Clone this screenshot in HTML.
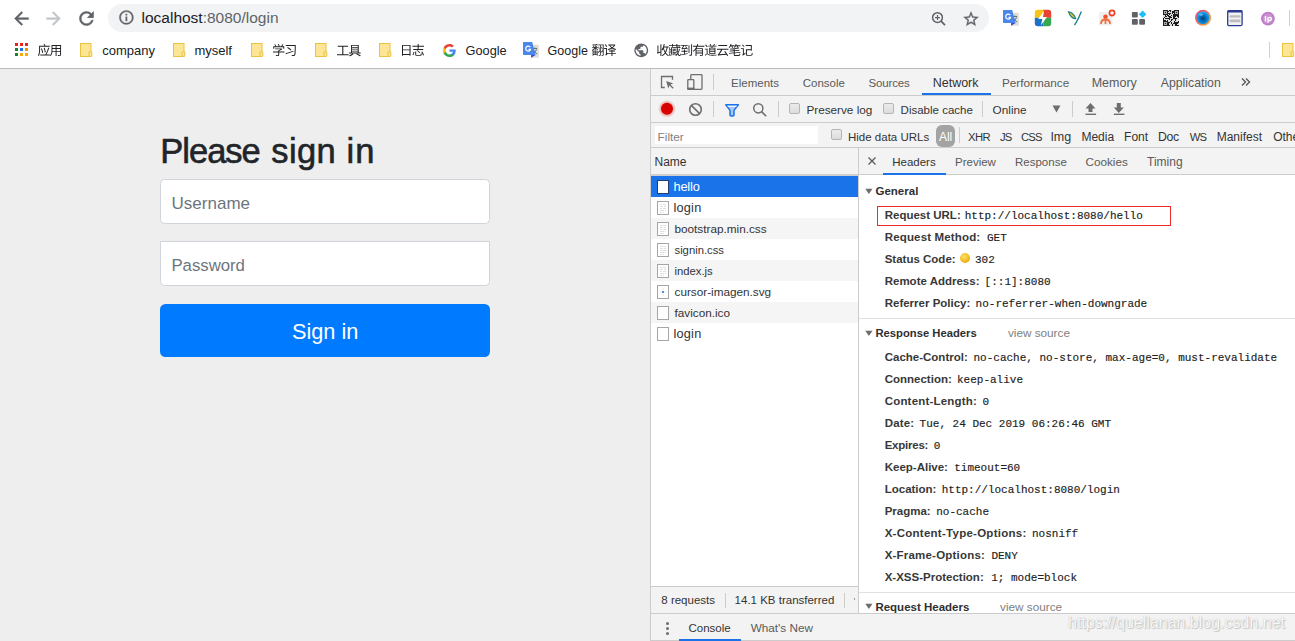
<!DOCTYPE html>
<html><head><meta charset="utf-8"><style>
html,body{margin:0;padding:0}
body{width:1295px;height:641px;overflow:hidden;position:relative;background:#fff;font-family:"Liberation Sans",sans-serif}
.a{position:absolute;white-space:pre;margin:0;padding:0}
</style></head><body>
<div class=a style='left:0px;top:0px;width:1295px;height:68px;background:#ffffff;'></div>
<div class=a style='left:0px;top:68px;width:1295px;height:1px;background:#bcbcbc;'></div>
<svg class=a style='left:11.2px;top:7.6px;' width='21' height='21' viewBox='0 0 21 21'><g transform='scale(0.875)'><path fill='#5f6368' stroke='#5f6368' stroke-width='0.5' d='M20 11H7.83l5.59-5.59L12 4l-8 8 8 8 1.41-1.41L7.83 13H20v-2z'/></g></svg>
<svg class=a style='left:43.2px;top:7.6px;' width='21' height='21' viewBox='0 0 21 21'><g transform='scale(0.875)'><path fill='#c2c5c9' stroke='#c2c5c9' stroke-width='0.5' d='M4 11h12.17l-5.59-5.59L12 4l8 8-8 8-1.41-1.41L16.17 13H4v-2z'/></g></svg>
<svg class=a style='left:75.8px;top:7.8px;' width='21' height='21' viewBox='0 0 21 21'><g transform='scale(0.875)'><path fill='#5f6368' stroke='#5f6368' stroke-width='0.6' d='M17.65 6.35A7.958 7.958 0 0012 4c-4.42 0-7.99 3.58-7.99 8s3.57 8 7.99 8c3.73 0 6.84-2.55 7.73-6h-2.08A5.99 5.99 0 0112 18c-3.31 0-6-2.69-6-6s2.69-6 6-6c1.66 0 3.14.69 4.22 1.78L13 11h7V4l-2.35 2.35z'/></g></svg>
<div class=a style='left:108px;top:4px;width:881px;height:28px;background:#f1f3f4;border-radius:14px'></div>
<svg class=a style='left:117.6px;top:9.1px;' width='17' height='17' viewBox='0 0 17 17'><g transform='scale(0.7)'><path fill='#5f6368' stroke='#5f6368' stroke-width='0.5' d='M11 7h2v2h-2zm0 4h2v6h-2zm1-9C6.48 2 2 6.48 2 12s4.48 10 10 10 10-4.48 10-10S17.52 2 12 2zm0 18c-4.41 0-8-3.59-8-8s3.59-8 8-8 8 3.59 8 8-3.59 8-8 8z'/></g></svg>
<div class=a style='left:141.5px;top:9px;font-family:"Liberation Sans";font-size:15.5px;font-weight:400;line-height:17px;color:#5f6368;'><span style='color:#202124'>localhost</span>:8080/login</div>
<svg class=a style='left:928px;top:9px;' width='20' height='20' viewBox='0 0 20 20'><circle cx='9.5' cy='8.6' r='4.9' fill='none' stroke='#5f6368' stroke-width='1.5'/><path d='M13 12.1l4 4' stroke='#5f6368' stroke-width='1.7'/><path d='M7 8.6h5M9.5 6.1v5' stroke='#5f6368' stroke-width='1.2'/></svg>
<svg class=a style='left:962.2px;top:9.7px;' width='18' height='18' viewBox='0 0 18 18'><g transform='scale(0.75)'><path fill='#5f6368' stroke='#5f6368' stroke-width='0.4' d='M22 9.24l-7.19-.62L12 2 9.19 8.63 2 9.24l5.46 4.73L5.82 21 12 17.27 18.18 21l-1.63-7.03L22 9.24zM12 15.4l-3.76 2.27 1-4.28-3.32-2.88 4.38-.38L12 6.1l1.71 4.04 4.38.38-3.32 2.88 1 4.28L12 15.4z'/></g></svg>
<div class=a style='left:1289px;top:10px;width:1px;height:16px;background:#d0d0d0;'></div>
<div class=a style='left:15px;top:43px;width:3px;height:3px;background:#e8231f;'></div>
<div class=a style='left:20px;top:43px;width:3px;height:3px;background:#e8231f;'></div>
<div class=a style='left:25px;top:43px;width:3px;height:3px;background:#e8231f;'></div>
<div class=a style='left:15px;top:48px;width:3px;height:3px;background:#188038;'></div>
<div class=a style='left:20px;top:48px;width:3px;height:3px;background:#1a73e8;'></div>
<div class=a style='left:25px;top:48px;width:3px;height:3px;background:#e89400;'></div>
<div class=a style='left:15px;top:53px;width:3px;height:3px;background:#188038;'></div>
<div class=a style='left:20px;top:53px;width:3px;height:3px;background:#f9ab00;'></div>
<div class=a style='left:25px;top:53px;width:3px;height:3px;background:#f9ab00;'></div>
<svg class=a style='left:80px;top:43px;' width='13' height='15' viewBox='0 0 13 15'><rect x='0.5' y='0.5' width='10.5' height='13' fill='#fde596' stroke='#e9c440'/><rect x='9' y='8.5' width='2.8' height='5' rx='1' fill='#fde596' stroke='#e9c440'/></svg>
<svg class=a style='left:173px;top:43px;' width='13' height='15' viewBox='0 0 13 15'><rect x='0.5' y='0.5' width='10.5' height='13' fill='#fde596' stroke='#e9c440'/><rect x='9' y='8.5' width='2.8' height='5' rx='1' fill='#fde596' stroke='#e9c440'/></svg>
<svg class=a style='left:251px;top:43px;' width='13' height='15' viewBox='0 0 13 15'><rect x='0.5' y='0.5' width='10.5' height='13' fill='#fde596' stroke='#e9c440'/><rect x='9' y='8.5' width='2.8' height='5' rx='1' fill='#fde596' stroke='#e9c440'/></svg>
<svg class=a style='left:315px;top:43px;' width='13' height='15' viewBox='0 0 13 15'><rect x='0.5' y='0.5' width='10.5' height='13' fill='#fde596' stroke='#e9c440'/><rect x='9' y='8.5' width='2.8' height='5' rx='1' fill='#fde596' stroke='#e9c440'/></svg>
<svg class=a style='left:379px;top:43px;' width='13' height='15' viewBox='0 0 13 15'><rect x='0.5' y='0.5' width='10.5' height='13' fill='#fde596' stroke='#e9c440'/><rect x='9' y='8.5' width='2.8' height='5' rx='1' fill='#fde596' stroke='#e9c440'/></svg>
<svg class=a style='left:1282px;top:43px;' width='13' height='15' viewBox='0 0 13 15'><rect x='0.5' y='0.5' width='10.5' height='13' fill='#fde596' stroke='#e9c440'/><rect x='9' y='8.5' width='2.8' height='5' rx='1' fill='#fde596' stroke='#e9c440'/></svg>
<svg class=a style='left:36.00px;top:41.84px' width='27' height='16' viewBox='-1.53 -13.02 27 16'><path fill='#202124' d='M3.43 -6.37C3.96 -4.97 4.59 -3.11 4.84 -1.9L5.76 -2.27C5.47 -3.48 4.85 -5.29 4.28 -6.72ZM6.25 -7.1C6.67 -5.68 7.15 -3.83 7.33 -2.63L8.27 -2.91C8.07 -4.12 7.59 -5.93 7.14 -7.34ZM6.08 -10.76C6.33 -10.31 6.59 -9.71 6.77 -9.24H1.57V-5.69C1.57 -3.85 1.48 -1.26 0.47 0.58C0.7 0.68 1.14 0.96 1.33 1.13C2.39 -0.81 2.56 -3.72 2.56 -5.69V-8.32H12.25V-9.24H7.88C7.71 -9.71 7.34 -10.45 7.03 -11.02ZM2.72 -0.51V0.43H12.41V-0.51H8.89C10.09 -2.52 11.05 -4.89 11.67 -7.05L10.65 -7.42C10.15 -5.17 9.15 -2.52 7.89 -0.51Z M13.99 -10.01V-5.29C13.99 -3.46 13.86 -1.16 12.42 0.47C12.64 0.58 13.03 0.91 13.17 1.1C14.17 0 14.61 -1.49 14.81 -2.95H18.07V0.92H19.06V-2.95H22.57V-0.29C22.57 -0.05 22.48 0.03 22.22 0.04C21.97 0.05 21.09 0.07 20.18 0.03C20.31 0.29 20.46 0.71 20.52 0.96C21.74 0.97 22.49 0.96 22.93 0.81C23.38 0.65 23.53 0.35 23.53 -0.29V-10.01ZM14.95 -9.07H18.07V-6.98H14.95ZM22.57 -9.07V-6.98H19.06V-9.07ZM14.95 -6.06H18.07V-3.87H14.9C14.94 -4.37 14.95 -4.85 14.95 -5.29ZM22.57 -6.06V-3.87H19.06V-6.06Z'/></svg>
<div class=a style='left:102.2px;top:43px;font-family:"Liberation Sans";font-size:13.0px;font-weight:400;line-height:15px;color:#202124;'>company</div>
<div class=a style='left:194.4px;top:43px;font-family:"Liberation Sans";font-size:13.0px;font-weight:400;line-height:15px;color:#202124;'>myself</div>
<svg class=a style='left:271.00px;top:41.95px' width='26' height='16' viewBox='-1.22 -13.04 26 16'><path fill='#202124' d='M5.98 -4.51V-3.57H0.78V-2.65H5.98V-0.18C5.98 0.01 5.92 0.07 5.65 0.09C5.38 0.1 4.51 0.1 3.5 0.08C3.67 0.34 3.85 0.74 3.93 1.01C5.11 1.01 5.85 1 6.33 0.84C6.81 0.71 6.97 0.43 6.97 -0.17V-2.65H12.29V-3.57H6.97V-4.09C8.15 -4.6 9.35 -5.34 10.19 -6.1L9.55 -6.58L9.35 -6.53H2.96V-5.67H8.25C7.58 -5.23 6.75 -4.78 5.98 -4.51ZM5.51 -10.71C5.9 -10.11 6.32 -9.31 6.5 -8.76H3.64L4.13 -9.01C3.91 -9.52 3.37 -10.24 2.87 -10.79L2.07 -10.43C2.48 -9.93 2.95 -9.26 3.2 -8.76H1.04V-6.17H1.98V-7.88H11.09V-6.17H12.06V-8.76H9.92C10.35 -9.28 10.8 -9.92 11.19 -10.5L10.21 -10.84C9.91 -10.21 9.36 -9.37 8.88 -8.76H6.76L7.44 -9.02C7.27 -9.58 6.81 -10.41 6.37 -11.04Z M15 -7.32C16.17 -6.51 17.71 -5.33 18.45 -4.6L19.14 -5.34C18.36 -6.06 16.81 -7.19 15.67 -7.96ZM13.34 -1.74 13.69 -0.77C15.69 -1.46 18.64 -2.47 21.32 -3.42L21.14 -4.33C18.3 -3.35 15.21 -2.31 13.34 -1.74ZM13.55 -9.97V-9.05H22.56C22.48 -3.02 22.36 -0.65 21.95 -0.19C21.81 -0.03 21.67 0.03 21.42 0.01C21.07 0.01 20.27 0.01 19.36 -0.05C19.54 0.21 19.66 0.61 19.67 0.88C20.42 0.94 21.27 0.95 21.78 0.9C22.26 0.86 22.57 0.71 22.87 0.29C23.36 -0.38 23.47 -2.57 23.54 -9.41C23.54 -9.55 23.54 -9.97 23.54 -9.97Z'/></svg>
<svg class=a style='left:335.00px;top:42.65px' width='27' height='15' viewBox='-1.32 -12.30 27 15'><path fill='#202124' d='M0.68 -0.94V0.04H12.36V-0.94H7.01V-8.45H11.7V-9.45H1.35V-8.45H5.93V-0.94Z M19.86 -1.09C21.31 -0.42 22.82 0.42 23.73 1.05L24.51 0.33C23.53 -0.29 21.96 -1.12 20.49 -1.78ZM16.26 -1.73C15.46 -1.03 13.83 -0.16 12.52 0.34C12.75 0.52 13.08 0.84 13.23 1.05C14.55 0.52 16.15 -0.33 17.19 -1.14ZM14.76 -10.3V-2.72H12.68V-1.83H24.36V-2.72H22.43V-10.3ZM15.69 -2.72V-3.9H21.45V-2.72ZM15.69 -7.62H21.45V-6.51H15.69ZM15.69 -8.37V-9.49H21.45V-8.37ZM15.69 -5.77H21.45V-4.64H15.69Z'/></svg>
<svg class=a style='left:400.00px;top:42.18px' width='26' height='15' viewBox='0.29 -12.92 26 15'><path fill='#202124' d='M3.29 -4.58H9.78V-0.92H3.29ZM3.29 -5.54V-9.06H9.78V-5.54ZM2.29 -10.04V0.9H3.29V0.05H9.78V0.83H10.82V-10.04Z M15.51 -3.33V-0.49C15.51 0.57 15.91 0.86 17.41 0.86C17.72 0.86 20.03 0.86 20.37 0.86C21.63 0.86 21.95 0.43 22.09 -1.27C21.81 -1.34 21.41 -1.47 21.19 -1.64C21.13 -0.25 21.01 -0.03 20.31 -0.03C19.8 -0.03 17.85 -0.03 17.46 -0.03C16.63 -0.03 16.48 -0.12 16.48 -0.51V-3.33ZM16.91 -4.11C17.98 -3.48 19.23 -2.52 19.81 -1.86L20.53 -2.52C19.9 -3.2 18.63 -4.09 17.59 -4.69ZM21.67 -3.02C22.32 -1.91 23.05 -0.43 23.35 0.47L24.3 0.07C23.97 -0.81 23.21 -2.26 22.56 -3.34ZM13.95 -3.21C13.69 -2.2 13.23 -0.88 12.65 -0.07L13.52 0.39C14.11 -0.47 14.55 -1.86 14.82 -2.91ZM17.97 -10.92V-9.05H12.73V-8.11H17.97V-5.9H13.57V-4.98H23.52V-5.9H18.98V-8.11H24.31V-9.05H18.98V-10.92Z'/></svg>
<svg class=a style='left:443px;top:43.5px;' width='13' height='13' viewBox='0 0 13 13'><g transform='scale(0.54)'><path fill='#4285F4' d='M23.5 12.27c0-.79-.07-1.54-.19-2.27H12v4.51h6.47c-.29 1.48-1.14 2.73-2.4 3.58v3h3.86c2.26-2.09 3.57-5.17 3.57-8.82z'/><path fill='#34A853' d='M12 24c3.24 0 5.95-1.08 7.93-2.91l-3.86-3c-1.08.72-2.45 1.16-4.07 1.16-3.13 0-5.78-2.11-6.73-4.96H1.29v3.09C3.26 21.3 7.31 24 12 24z'/><path fill='#FBBC05' d='M5.27 14.29c-.25-.72-.38-1.49-.38-2.29s.14-1.57.38-2.29V6.62H1.29C.47 8.24 0 10.06 0 12s.47 3.76 1.29 5.38l3.98-3.09z'/><path fill='#EA4335' d='M12 4.75c1.77 0 3.35.61 4.6 1.8l3.42-3.42C17.95 1.19 15.24 0 12 0 7.31 0 3.26 2.7 1.29 6.62l3.98 3.09c.95-2.85 3.6-4.96 6.73-4.96z'/></g></svg>
<div class=a style='left:465.6px;top:43px;font-family:"Liberation Sans";font-size:12.75px;font-weight:400;line-height:15px;color:#202124;'>Google</div>
<svg class=a style='left:522px;top:41px;' width='18' height='18' viewBox='0 0 18 18'><rect x='9' y='3.7' width='7.8' height='13' rx='0.5' fill='#dedede'/><path d='M10.6 7.5h4.6M12.9 6.5v1M11.2 8.2c1 2.5 2.5 4 4 4.8M14.5 8.2c-0.8 2.2-2 3.8-3.6 4.8' fill='none' stroke='#5a6a6a' stroke-width='0.9'/><path d='M1.6 0.9h8.6l3.4 13H1.6c-0.4 0-0.6-0.3-0.6-0.6V1.5c0-0.3 0.2-0.6 0.6-0.6z' fill='#4a87ea'/><path d='M9.1 13.9h4.5l-4.5 2.8z' fill='#3949c0'/><path d='M8.3 6.2A2.5 2.5 0 1 0 8.6 8.3H6.6' fill='none' stroke='#fff' stroke-width='1.2'/></svg>
<div class=a style='left:547.6px;top:44px;font-family:"Liberation Sans";font-size:12.5px;font-weight:400;line-height:14px;color:#202124;'>Google</div>
<svg class=a style='left:590.00px;top:42.10px' width='28' height='15' viewBox='-1.53 -12.83 28 15'><path fill='#202124' d='M6.63 -7.99C6.98 -7.18 7.34 -6.06 7.49 -5.39L8.18 -5.64C8.03 -6.28 7.64 -7.37 7.28 -8.19ZM9.54 -8.03C9.89 -7.21 10.26 -6.12 10.39 -5.47L11.09 -5.68C10.95 -6.32 10.56 -7.4 10.19 -8.19ZM5.23 -9.58C5.07 -9.07 4.76 -8.31 4.5 -7.8H4.07V-9.79C4.88 -9.89 5.63 -10.01 6.23 -10.15L5.69 -10.83C4.52 -10.54 2.43 -10.31 0.71 -10.21C0.82 -10.02 0.91 -9.72 0.95 -9.53C1.66 -9.55 2.46 -9.62 3.24 -9.7V-7.8H0.64V-7.03H2.9C2.29 -6.16 1.29 -5.25 0.47 -4.76C0.61 -4.54 0.81 -4.16 0.88 -3.91L1.09 -4.06V1.03H1.86V0.29H5.32V0.87H6.11V-4.16H1.22C1.92 -4.71 2.67 -5.51 3.24 -6.3V-4.39H4.07V-6.33C4.73 -5.8 5.63 -5.02 5.98 -4.64L6.47 -5.41C6.15 -5.68 4.84 -6.62 4.2 -7.03H6.28V-7.8H5.26C5.5 -8.24 5.76 -8.81 5.98 -9.33ZM1.3 -9.23C1.49 -8.78 1.72 -8.16 1.82 -7.8L2.51 -8.02C2.4 -8.37 2.17 -8.96 1.96 -9.4ZM3.29 -1.62V-0.49H1.86V-1.62ZM4 -1.62H5.32V-0.49H4ZM3.29 -2.33H1.86V-3.39H3.29ZM4 -2.33V-3.39H5.32V-2.33ZM6.41 -2.59 6.86 -1.91C7.34 -2.42 7.88 -3.02 8.41 -3.61V-0.08C8.41 0.09 8.36 0.13 8.22 0.13C8.06 0.14 7.59 0.14 7.1 0.13C7.23 0.36 7.33 0.75 7.36 0.97C8.06 0.97 8.53 0.96 8.83 0.82C9.11 0.66 9.22 0.4 9.22 -0.08V-10.31H6.66V-9.48H8.41V-4.73C7.66 -3.89 6.9 -3.09 6.41 -2.59ZM9.39 -2.73 9.85 -2.05C10.3 -2.52 10.79 -3.07 11.27 -3.61V-0.1C11.27 0.08 11.22 0.13 11.06 0.13C10.92 0.13 10.43 0.14 9.91 0.12C10.04 0.35 10.17 0.77 10.21 1C10.91 1 11.4 0.97 11.7 0.83C12.01 0.68 12.12 0.4 12.12 -0.09V-10.3H9.53V-9.46H11.27V-4.72C10.57 -3.95 9.87 -3.2 9.39 -2.73Z M13.31 -10.14C13.87 -9.44 14.54 -8.49 14.82 -7.88L15.61 -8.45C15.3 -9.04 14.63 -9.96 14.04 -10.62ZM19.94 -5.36V-4.21H17.36V-3.34H19.94V-1.95H16.64V-1.59L16.43 -2.09L15.38 -1.31V-6.85H12.61V-5.92H14.43V-1.26C14.43 -0.62 14.03 -0.18 13.79 0.01C13.96 0.16 14.24 0.52 14.34 0.73C14.52 0.48 14.82 0.22 16.64 -1.17V-1.08H19.94V1.07H20.91V-1.08H24.35V-1.95H20.91V-3.34H23.5V-4.21H20.91V-5.36ZM22.43 -9.36C21.93 -8.66 21.27 -8.03 20.49 -7.5C19.77 -8.03 19.16 -8.66 18.71 -9.36ZM16.81 -10.23V-9.36H17.75C18.25 -8.46 18.93 -7.68 19.72 -7.01C18.62 -6.37 17.37 -5.89 16.16 -5.6C16.34 -5.41 16.58 -5.02 16.68 -4.77C17.99 -5.13 19.32 -5.69 20.5 -6.43C21.53 -5.75 22.73 -5.23 24.02 -4.9C24.17 -5.16 24.43 -5.54 24.64 -5.72C23.41 -5.98 22.28 -6.4 21.3 -6.97C22.36 -7.77 23.26 -8.75 23.84 -9.92L23.21 -10.27L23.04 -10.23Z'/></svg>
<svg class=a style='left:632.8px;top:41.5px;' width='17' height='17' viewBox='0 0 17 17'><g transform='scale(0.69)'><path fill='#5f6368' d='M12 2C6.48 2 2 6.48 2 12s4.48 10 10 10 10-4.48 10-10S17.52 2 12 2zm-1 17.93c-3.95-.49-7-3.85-7-7.93 0-.62.08-1.21.21-1.79L9 15v1c0 1.1.9 2 2 2v1.93zm6.9-2.54c-.26-.81-1-1.39-1.9-1.39h-1v-3c0-.55-.45-1-1-1H8v-2h2c.55 0 1-.45 1-1V7h2c1.1 0 2-.9 2-2v-.41c2.93 1.19 5 4.06 5 7.41 0 2.08-.8 3.97-2.1 5.39z'/></g></svg>
<svg class=a style='left:655.00px;top:41.94px' width='99' height='16' viewBox='-1.21 -12.98 99 16'><path fill='#202124' d='M7.64 -7.46H10.46C10.19 -5.81 9.76 -4.39 9.14 -3.22C8.46 -4.42 7.94 -5.8 7.58 -7.27ZM7.5 -10.92C7.12 -8.66 6.43 -6.53 5.32 -5.21C5.54 -5.02 5.89 -4.59 6.02 -4.39C6.41 -4.88 6.75 -5.43 7.06 -6.06C7.46 -4.69 7.97 -3.43 8.61 -2.34C7.85 -1.25 6.85 -0.39 5.54 0.25C5.75 0.45 6.06 0.86 6.17 1.05C7.41 0.39 8.38 -0.45 9.15 -1.49C9.91 -0.44 10.79 0.4 11.86 0.99C12 0.74 12.31 0.38 12.53 0.19C11.41 -0.35 10.48 -1.23 9.71 -2.31C10.54 -3.7 11.09 -5.41 11.45 -7.46H12.43V-8.38H7.94C8.16 -9.14 8.36 -9.95 8.5 -10.76ZM1.2 -1.3C1.44 -1.51 1.83 -1.69 4.21 -2.56V1.05H5.17V-10.72H4.21V-3.51L2.21 -2.85V-9.48H1.25V-3.08C1.25 -2.56 0.99 -2.31 0.79 -2.2C0.95 -1.98 1.13 -1.55 1.2 -1.3Z M22.84 -6.12C22.62 -4.99 22.3 -3.95 21.88 -3.03C21.7 -4.07 21.55 -5.37 21.49 -6.93H24.38V-7.77H23.54L23.88 -8.05C23.63 -8.37 23.08 -8.79 22.61 -9.05L22.02 -8.61C22.39 -8.38 22.8 -8.06 23.08 -7.77H21.46L21.45 -8.62H21.09V-9.18H24.25V-10.01H21.09V-10.92H20.12V-10.01H16.84V-10.92H15.87V-10.01H12.78V-9.18H15.87V-8.27H16.84V-9.18H20.12V-8.24H20.57L20.58 -7.77H14.95V-5.49H13.87V-7.71H13.12V-4.26H13.87V-4.68H14.95V-4.17V-3.6H12.53V-2.77H13.26V-2.2C13.26 -1.39 13.14 -0.22 12.44 0.62C12.62 0.73 12.9 0.91 13.05 1.04C13.86 0.12 13.99 -1.25 13.99 -2.17V-2.77H14.91C14.85 -1.6 14.65 -0.34 14.12 0.65C14.33 0.73 14.69 0.92 14.85 1.07C15.67 -0.4 15.8 -2.57 15.8 -4.17V-6.93H20.62C20.74 -4.86 20.96 -3.17 21.27 -1.89C21.02 -1.48 20.75 -1.1 20.45 -0.77V-1.14H18.98V-2.09H20.33V-4.52H18.98V-5.43H20.33V-6.11H16.46V0.31H17.19V-0.47H20.18C19.84 -0.12 19.46 0.19 19.06 0.47C19.28 0.6 19.64 0.9 19.79 1.07C20.48 0.55 21.07 -0.09 21.59 -0.81C22.04 0.42 22.63 1.05 23.35 1.05C24.1 1.05 24.43 0.73 24.57 -1.01C24.35 -1.09 24.06 -1.27 23.88 -1.44C23.82 -0.16 23.69 0.18 23.41 0.19C22.98 0.19 22.53 -0.43 22.18 -1.72C22.87 -2.91 23.38 -4.34 23.73 -5.97ZM18.27 -1.14H17.19V-2.09H18.27ZM18.27 -4.52H17.19V-5.43H18.27ZM17.19 -3.89H19.61V-2.74H17.19Z M32.33 -9.8V-1.92H33.24V-9.8ZM34.91 -10.71V-0.48C34.91 -0.26 34.84 -0.19 34.62 -0.19C34.4 -0.18 33.69 -0.18 32.92 -0.21C33.07 0.05 33.23 0.49 33.28 0.77C34.23 0.77 34.92 0.74 35.32 0.57C35.71 0.42 35.86 0.13 35.86 -0.48V-10.71ZM24.81 -0.55 25.03 0.39C26.74 0.05 29.21 -0.42 31.53 -0.87L31.48 -1.73L28.75 -1.22V-3.26H31.34V-4.13H28.75V-5.52H27.82V-4.13H25.26V-3.26H27.82V-1.07ZM25.55 -5.71C25.86 -5.85 26.34 -5.9 30.41 -6.29C30.59 -5.99 30.75 -5.72 30.86 -5.49L31.61 -5.98C31.23 -6.72 30.37 -7.9 29.64 -8.78L28.93 -8.36C29.25 -7.97 29.59 -7.5 29.9 -7.06L26.57 -6.77C27.11 -7.47 27.64 -8.35 28.08 -9.2H31.61V-10.06H24.92V-9.2H26.99C26.57 -8.28 26.04 -7.45 25.85 -7.2C25.62 -6.89 25.43 -6.67 25.22 -6.63C25.34 -6.37 25.48 -5.92 25.55 -5.71Z M41.08 -10.92C40.93 -10.36 40.74 -9.79 40.51 -9.23H36.82V-8.32H40.11C39.28 -6.6 38.08 -5.02 36.52 -3.95C36.7 -3.77 37.01 -3.42 37.14 -3.2C37.96 -3.78 38.69 -4.48 39.31 -5.28V1.03H40.28V-1.55H45.72V-0.19C45.72 0 45.66 0.08 45.44 0.08C45.19 0.09 44.4 0.1 43.54 0.07C43.67 0.34 43.81 0.74 43.87 1C44.98 1 45.7 1 46.13 0.86C46.56 0.69 46.69 0.39 46.69 -0.18V-6.81H40.37C40.67 -7.31 40.93 -7.8 41.16 -8.32H48.21V-9.23H41.55C41.75 -9.71 41.91 -10.21 42.07 -10.69ZM40.28 -3.76H45.72V-2.39H40.28ZM40.28 -4.59V-5.93H45.72V-4.59Z M48.83 -9.95C49.52 -9.28 50.34 -8.35 50.69 -7.75L51.5 -8.29C51.11 -8.89 50.27 -9.79 49.59 -10.41ZM53.91 -4.78H58.27V-3.69H53.91ZM53.91 -3H58.27V-1.91H53.91ZM53.91 -6.55H58.27V-5.47H53.91ZM52.99 -7.29V-1.16H59.22V-7.29H56.11C56.25 -7.62 56.41 -8.01 56.57 -8.38H60.31V-9.2H57.88C58.19 -9.63 58.52 -10.15 58.83 -10.63L57.87 -10.92C57.66 -10.41 57.24 -9.71 56.89 -9.2H54.46L55.14 -9.52C54.98 -9.92 54.56 -10.54 54.19 -10.97L53.38 -10.62C53.72 -10.19 54.08 -9.61 54.25 -9.2H52.04V-8.38H55.49C55.41 -8.03 55.29 -7.63 55.19 -7.29ZM51.41 -6.28H48.66V-5.37H50.47V-1.33C49.88 -1.12 49.22 -0.57 48.55 0.09L49.16 0.88C49.82 0.08 50.48 -0.61 50.95 -0.61C51.25 -0.61 51.65 -0.22 52.21 0.09C53.11 0.6 54.23 0.74 55.76 0.74C57.01 0.74 59.3 0.66 60.23 0.6C60.25 0.33 60.4 -0.12 60.51 -0.35C59.24 -0.22 57.31 -0.13 55.79 -0.13C54.37 -0.13 53.25 -0.22 52.42 -0.68C51.97 -0.94 51.67 -1.17 51.41 -1.3Z M62.15 -9.88V-8.89H70.95V-9.88ZM61.83 0.57C62.37 0.35 63.12 0.31 70.28 -0.31C70.59 0.21 70.87 0.68 71.08 1.08L72.01 0.53C71.36 -0.69 70.05 -2.59 68.94 -4.06L68.06 -3.6C68.58 -2.89 69.16 -2.04 69.7 -1.22L63.16 -0.73C64.2 -1.98 65.25 -3.57 66.12 -5.21H72.28V-6.21H60.73V-5.21H64.77C63.94 -3.54 62.85 -1.94 62.47 -1.48C62.05 -0.95 61.76 -0.6 61.46 -0.52C61.6 -0.21 61.78 0.34 61.83 0.57Z M72.75 -2.07 72.84 -1.21 77.54 -1.61V-0.57C77.54 0.61 77.94 0.92 79.41 0.92C79.73 0.92 82.05 0.92 82.39 0.92C83.62 0.92 83.92 0.49 84.06 -1.01C83.78 -1.08 83.39 -1.22 83.17 -1.38C83.08 -0.18 82.97 0.05 82.33 0.05C81.83 0.05 79.85 0.05 79.46 0.05C78.66 0.05 78.51 -0.07 78.51 -0.57V-1.7L84.27 -2.2L84.18 -3.04L78.51 -2.56V-3.93L83.09 -4.32L83 -5.12L78.51 -4.75V-5.93C80.19 -6.11 81.79 -6.36 83.04 -6.66L82.49 -7.45C80.4 -6.93 76.77 -6.54 73.65 -6.34C73.74 -6.12 73.86 -5.77 73.89 -5.54C75.06 -5.6 76.32 -5.71 77.54 -5.82V-4.65L73.39 -4.3L73.48 -3.48L77.54 -3.83V-2.47ZM74.39 -10.98C73.99 -9.67 73.29 -8.38 72.47 -7.53C72.7 -7.4 73.11 -7.14 73.3 -6.99C73.73 -7.5 74.14 -8.14 74.52 -8.85H75.19C75.52 -8.24 75.86 -7.5 76 -7.03L76.86 -7.36C76.73 -7.76 76.46 -8.33 76.17 -8.85H78.19V-9.68H74.91C75.07 -10.04 75.21 -10.39 75.34 -10.75ZM79.51 -10.98C79.14 -9.7 78.44 -8.49 77.58 -7.7C77.81 -7.57 78.23 -7.29 78.41 -7.14C78.85 -7.59 79.28 -8.19 79.66 -8.85H80.59C80.88 -8.36 81.18 -7.79 81.3 -7.38L82.15 -7.7C82.05 -8.02 81.83 -8.45 81.58 -8.85H84.16V-9.68H80.06C80.22 -10.04 80.35 -10.39 80.46 -10.75Z M85.61 -10C86.33 -9.36 87.24 -8.48 87.64 -7.9L88.36 -8.59C87.9 -9.14 86.99 -10 86.29 -10.59ZM86.6 0.79V0.78C86.78 0.53 87.15 0.26 89.3 -1.27C89.2 -1.47 89.06 -1.86 88.99 -2.12L87.64 -1.2V-6.84H84.6V-5.89H86.68V-1.21C86.68 -0.57 86.28 -0.13 86.04 0.05C86.22 0.22 86.5 0.58 86.6 0.79ZM89.45 -10.01V-9.04H94.61V-5.75H89.69V-0.74C89.69 0.53 90.16 0.84 91.62 0.84C91.94 0.84 94.27 0.84 94.61 0.84C96.03 0.84 96.36 0.26 96.51 -1.86C96.22 -1.92 95.8 -2.09 95.56 -2.27C95.49 -0.43 95.36 -0.09 94.56 -0.09C94.05 -0.09 92.07 -0.09 91.68 -0.09C90.85 -0.09 90.69 -0.21 90.69 -0.73V-4.81H94.61V-4.13H95.58V-10.01Z'/></svg>
<svg class=a style='left:1002px;top:9px;' width='18' height='18' viewBox='0 0 18 18'><rect x='9' y='3.7' width='7.8' height='13' rx='0.5' fill='#dedede'/><path d='M10.6 7.5h4.6M12.9 6.5v1M11.2 8.2c1 2.5 2.5 4 4 4.8M14.5 8.2c-0.8 2.2-2 3.8-3.6 4.8' fill='none' stroke='#5a6a6a' stroke-width='0.9'/><path d='M1.6 0.9h8.6l3.4 13H1.6c-0.4 0-0.6-0.3-0.6-0.6V1.5c0-0.3 0.2-0.6 0.6-0.6z' fill='#4a87ea'/><path d='M9.1 13.9h4.5l-4.5 2.8z' fill='#3949c0'/><path d='M8.3 6.2A2.5 2.5 0 1 0 8.6 8.3H6.6' fill='none' stroke='#fff' stroke-width='1.2'/></svg>
<svg class=a style='left:1034px;top:9px;' width='18' height='18' viewBox='0 0 18 18'><defs><clipPath id='lc'><rect x='0.8' y='0.8' width='16.4' height='16.4' rx='3'/></clipPath></defs><g clip-path='url(#lc)'><rect x='0' y='0' width='9.2' height='8.8' fill='#f5c518'/><rect x='9.2' y='0' width='9' height='8.8' fill='#e84335'/><rect x='0' y='8.8' width='9.2' height='9.2' fill='#1a73c8'/><rect x='9.2' y='8.8' width='9' height='9.2' fill='#34a853'/></g><path d='M10.2 1.5L4.2 10h4.2l-1.6 6.5 6.2-8.6H8.8z' fill='#fff'/></svg>
<svg class=a style='left:1067px;top:10px;' width='16' height='17' viewBox='0 0 16 17'><path d='M1.5 1.8c3 0.6 6 3.2 7.2 6.8-2.8 0.4-5.6-2.2-7.2-6.8z' fill='#d0c030' stroke='#17808a' stroke-width='1.1'/><path d='M14.3 1.5c-1.8 4.5-3.8 9.5-6.8 13.6' fill='none' stroke='#17808a' stroke-width='1.3'/></svg>
<svg class=a style='left:1098px;top:8px;' width='19' height='19' viewBox='0 0 19 19'><rect x='1' y='4' width='13.5' height='13.5' fill='#f0f0f0'/><circle cx='14' cy='5' r='2.6' fill='none' stroke='#f03c20' stroke-width='1.6'/><circle cx='7.5' cy='8.8' r='2.3' fill='#f05030'/><path d='M7.5 10v6M3 16c0-3 1.5-4.5 4.5-4.5S12 13 12 16' fill='none' stroke='#f07040' stroke-width='1.8'/></svg>
<svg class=a style='left:1130px;top:9px;' width='18' height='18' viewBox='0 0 18 18'><rect x='1.9' y='2.9' width='5.9' height='5.6' rx='1' fill='#5f6368'/><rect x='1.9' y='9.9' width='5.9' height='5.9' rx='1' fill='#5f6368'/><rect x='9.2' y='9.9' width='5.8' height='5.9' rx='1' fill='#5f6368'/><path d='M12.6 1.5l3.8 3.8-3.8 3.8-3.8-3.8z' fill='#1ec0f5'/></svg>
<svg class=a style='left:1163px;top:10px;' width='16' height='16' viewBox='0 0 16 16'><rect width='16' height='16' fill='#ddd'/><g fill='#1a1a1a'><rect x='6' y='0' width='1' height='1'/><rect x='7' y='0' width='1' height='1'/><rect x='11' y='0' width='1' height='1'/><rect x='12' y='0' width='1' height='1'/><rect x='13' y='0' width='1' height='1'/><rect x='14' y='0' width='1' height='1'/><rect x='0' y='1' width='1' height='1'/><rect x='1' y='1' width='1' height='1'/><rect x='2' y='1' width='1' height='1'/><rect x='5' y='1' width='1' height='1'/><rect x='7' y='1' width='1' height='1'/><rect x='9' y='1' width='1' height='1'/><rect x='10' y='1' width='1' height='1'/><rect x='12' y='1' width='1' height='1'/><rect x='13' y='1' width='1' height='1'/><rect x='0' y='2' width='1' height='1'/><rect x='2' y='2' width='1' height='1'/><rect x='4' y='2' width='1' height='1'/><rect x='9' y='2' width='1' height='1'/><rect x='10' y='2' width='1' height='1'/><rect x='11' y='2' width='1' height='1'/><rect x='12' y='2' width='1' height='1'/><rect x='13' y='2' width='1' height='1'/><rect x='14' y='2' width='1' height='1'/><rect x='0' y='3' width='1' height='1'/><rect x='2' y='3' width='1' height='1'/><rect x='3' y='3' width='1' height='1'/><rect x='5' y='3' width='1' height='1'/><rect x='6' y='3' width='1' height='1'/><rect x='7' y='3' width='1' height='1'/><rect x='9' y='3' width='1' height='1'/><rect x='11' y='3' width='1' height='1'/><rect x='14' y='3' width='1' height='1'/><rect x='0' y='4' width='1' height='1'/><rect x='2' y='4' width='1' height='1'/><rect x='3' y='4' width='1' height='1'/><rect x='4' y='4' width='1' height='1'/><rect x='6' y='4' width='1' height='1'/><rect x='10' y='4' width='1' height='1'/><rect x='11' y='4' width='1' height='1'/><rect x='12' y='4' width='1' height='1'/><rect x='14' y='4' width='1' height='1'/><rect x='2' y='5' width='1' height='1'/><rect x='4' y='5' width='1' height='1'/><rect x='5' y='5' width='1' height='1'/><rect x='8' y='5' width='1' height='1'/><rect x='10' y='5' width='1' height='1'/><rect x='11' y='5' width='1' height='1'/><rect x='12' y='5' width='1' height='1'/><rect x='13' y='5' width='1' height='1'/><rect x='14' y='5' width='1' height='1'/><rect x='15' y='5' width='1' height='1'/><rect x='2' y='6' width='1' height='1'/><rect x='3' y='6' width='1' height='1'/><rect x='5' y='6' width='1' height='1'/><rect x='6' y='6' width='1' height='1'/><rect x='7' y='6' width='1' height='1'/><rect x='10' y='6' width='1' height='1'/><rect x='11' y='6' width='1' height='1'/><rect x='12' y='6' width='1' height='1'/><rect x='14' y='6' width='1' height='1'/><rect x='15' y='6' width='1' height='1'/><rect x='1' y='7' width='1' height='1'/><rect x='6' y='7' width='1' height='1'/><rect x='7' y='7' width='1' height='1'/><rect x='8' y='7' width='1' height='1'/><rect x='10' y='7' width='1' height='1'/><rect x='11' y='7' width='1' height='1'/><rect x='15' y='7' width='1' height='1'/><rect x='0' y='8' width='1' height='1'/><rect x='2' y='8' width='1' height='1'/><rect x='3' y='8' width='1' height='1'/><rect x='4' y='8' width='1' height='1'/><rect x='5' y='8' width='1' height='1'/><rect x='6' y='8' width='1' height='1'/><rect x='10' y='8' width='1' height='1'/><rect x='11' y='8' width='1' height='1'/><rect x='12' y='8' width='1' height='1'/><rect x='13' y='8' width='1' height='1'/><rect x='0' y='9' width='1' height='1'/><rect x='6' y='9' width='1' height='1'/><rect x='8' y='9' width='1' height='1'/><rect x='9' y='9' width='1' height='1'/><rect x='12' y='9' width='1' height='1'/><rect x='0' y='10' width='1' height='1'/><rect x='1' y='10' width='1' height='1'/><rect x='2' y='10' width='1' height='1'/><rect x='4' y='10' width='1' height='1'/><rect x='8' y='10' width='1' height='1'/><rect x='12' y='10' width='1' height='1'/><rect x='2' y='11' width='1' height='1'/><rect x='3' y='11' width='1' height='1'/><rect x='4' y='11' width='1' height='1'/><rect x='7' y='11' width='1' height='1'/><rect x='11' y='11' width='1' height='1'/><rect x='15' y='11' width='1' height='1'/><rect x='4' y='12' width='1' height='1'/><rect x='5' y='12' width='1' height='1'/><rect x='6' y='12' width='1' height='1'/><rect x='8' y='12' width='1' height='1'/><rect x='11' y='12' width='1' height='1'/><rect x='12' y='12' width='1' height='1'/><rect x='13' y='12' width='1' height='1'/><rect x='14' y='12' width='1' height='1'/><rect x='15' y='12' width='1' height='1'/><rect x='0' y='13' width='1' height='1'/><rect x='1' y='13' width='1' height='1'/><rect x='2' y='13' width='1' height='1'/><rect x='3' y='13' width='1' height='1'/><rect x='4' y='13' width='1' height='1'/><rect x='5' y='13' width='1' height='1'/><rect x='8' y='13' width='1' height='1'/><rect x='10' y='13' width='1' height='1'/><rect x='11' y='13' width='1' height='1'/><rect x='12' y='13' width='1' height='1'/><rect x='13' y='13' width='1' height='1'/><rect x='14' y='13' width='1' height='1'/><rect x='0' y='14' width='1' height='1'/><rect x='1' y='14' width='1' height='1'/><rect x='3' y='14' width='1' height='1'/><rect x='4' y='14' width='1' height='1'/><rect x='5' y='14' width='1' height='1'/><rect x='9' y='14' width='1' height='1'/><rect x='12' y='14' width='1' height='1'/><rect x='13' y='14' width='1' height='1'/><rect x='3' y='15' width='1' height='1'/><rect x='5' y='15' width='1' height='1'/><rect x='6' y='15' width='1' height='1'/><rect x='9' y='15' width='1' height='1'/><rect x='12' y='15' width='1' height='1'/><rect x='13' y='15' width='1' height='1'/><rect x='14' y='15' width='1' height='1'/><rect x='15' y='15' width='1' height='1'/><path d='M0 0h5v5H0zM11 0h5v5h-5zM0 11h5v5H0z' fill='#222'/><path d='M1 1h3v3H1zM12 1h3v3h-3zM1 12h3v3H1z' fill='#aaa'/><rect x='2' y='2' width='1' height='1' fill='#222'/><rect x='13' y='2' width='1' height='1' fill='#222'/><rect x='2' y='13' width='1' height='1' fill='#222'/></g></svg>
<svg class=a style='left:1194px;top:9px;' width='18' height='18' viewBox='0 0 18 18'><defs><linearGradient id='rg' x1='0' y1='0' x2='1' y2='1'><stop offset='0' stop-color='#e83a8a'/><stop offset='1' stop-color='#ffb020'/></linearGradient><radialGradient id='bg2' cx='0.5' cy='0.55' r='0.5'><stop offset='0' stop-color='#06406e'/><stop offset='0.6' stop-color='#0a7ad0'/><stop offset='1' stop-color='#18a8f0'/></radialGradient></defs><circle cx='9' cy='8.8' r='8' fill='url(#rg)'/><circle cx='9' cy='8.8' r='6.4' fill='url(#bg2)'/><ellipse cx='7' cy='5.6' rx='2' ry='1.2' fill='#9fd8ff' opacity='0.6'/></svg>
<svg class=a style='left:1226px;top:9px;' width='18' height='18' viewBox='0 0 18 18'><rect x='1.7' y='1.7' width='14.4' height='15' rx='1.5' fill='#f2f2f2' stroke='#2d3a94' stroke-width='1.3'/><rect x='1.5' y='1.3' width='14.8' height='2.2' fill='#2d3a94'/><rect x='3.5' y='6.2' width='11' height='2.4' rx='1.2' fill='#bdbdbd'/><rect x='3.5' y='10.6' width='11' height='2.6' rx='1.3' fill='#bdbdbd'/></svg>
<svg class=a style='left:1260px;top:11px;' width='16' height='16' viewBox='0 0 16 16'><circle cx='7.9' cy='7.6' r='6.9' fill='#bf7ec8'/><circle cx='7.9' cy='7.6' r='5' fill='#c990d0'/><path d='M5.5 5v5.5M8 6.5v5.2M8 6.8c2.5-1 3.5 0 3.3 1.4-0.2 1.4-2 1.6-3.3 1' fill='none' stroke='#fff' stroke-width='1.4'/></svg>
<div class=a style='left:1269px;top:42px;width:1px;height:16px;background:#d0d0d0;'></div>
<div class=a style='left:0px;top:69px;width:650px;height:572px;background:#eeeeee;'></div>
<div class=a style='left:160.3px;top:132px;font-family:"Liberation Sans";font-size:34.5px;font-weight:400;line-height:38px;color:#212529;letter-spacing:-1.00px;-webkit-text-stroke:0.6px #212529'>Please</div>
<div class=a style='left:271.3px;top:132px;font-family:"Liberation Sans";font-size:34.5px;font-weight:400;line-height:38px;color:#212529;letter-spacing:0.37px;-webkit-text-stroke:0.6px #212529'>sign</div>
<div class=a style='left:346.6px;top:132px;font-family:"Liberation Sans";font-size:34.5px;font-weight:400;line-height:38px;color:#212529;letter-spacing:1.00px;-webkit-text-stroke:0.6px #212529'>in</div>
<div class=a style='left:160px;top:179px;width:330px;height:45px;background:#ffffff;box-sizing:border-box;border:1px solid #ced4da;border-radius:4.5px'></div>
<div class=a style='left:171.6px;top:194px;font-family:"Liberation Sans";font-size:17.0px;font-weight:400;line-height:19px;color:#6c757d;'>Username</div>
<div class=a style='left:160px;top:241px;width:330px;height:45px;background:#ffffff;box-sizing:border-box;border:1px solid #ced4da;border-radius:0 0 4.5px 4.5px'></div>
<div class=a style='left:171.4px;top:256px;font-family:"Liberation Sans";font-size:16.75px;font-weight:400;line-height:19px;color:#6c757d;'>Password</div>
<div class=a style='left:160px;top:304px;width:330px;height:53px;background:#007bff;border-radius:5.5px'></div>
<div class=a style='left:291.9px;top:319px;font-family:"Liberation Sans";font-size:21.75px;font-weight:400;line-height:25px;color:#ffffff;'>Sign in</div>
<div class=a style='left:650px;top:69px;width:1px;height:572px;background:#cccccc;'></div>
<div class=a style='left:651px;top:69px;width:644px;height:26px;background:#f3f3f3;'></div>
<div class=a style='left:651px;top:95px;width:644px;height:1px;background:#cccccc;'></div>
<div class=a style='left:651px;top:96px;width:644px;height:26px;background:#f3f3f3;'></div>
<div class=a style='left:651px;top:122px;width:644px;height:1px;background:#cccccc;'></div>
<div class=a style='left:651px;top:123px;width:644px;height:24px;background:#f3f3f3;'></div>
<div class=a style='left:651px;top:147px;width:644px;height:1px;background:#cccccc;'></div>
<svg class=a style='left:658px;top:73px;' width='20' height='20' viewBox='0 0 20 20'><path d='M6.8 14.5H3.5V3.5h11v3.2' fill='none' stroke='#6e6e6e' stroke-width='1.3'/><path d='M8.2 8.1l7.2 2.3-3 1.2 3.2 3.2-0.9 0.9-3.2-3.2-1.2 3z' fill='#6e6e6e'/></svg>
<svg class=a style='left:685px;top:72px;' width='20' height='20' viewBox='0 0 20 20'><rect x='5.8' y='2.7' width='11.2' height='14.6' rx='0.8' fill='none' stroke='#6e6e6e' stroke-width='1.3'/><rect x='2.8' y='7.7' width='6' height='9.6' rx='0.6' fill='#f3f3f3' stroke='#6e6e6e' stroke-width='1.3'/><rect x='2.2' y='15.6' width='7.2' height='1.8' fill='#6e6e6e'/></svg>
<div class=a style='left:713px;top:74px;width:1px;height:16px;background:#cccccc;'></div>
<div class=a style='left:731.1px;top:77px;font-family:"Liberation Sans";font-size:11.5px;font-weight:400;line-height:12px;color:#5a5a5a;'>Elements</div>
<div class=a style='left:802.7px;top:77px;font-family:"Liberation Sans";font-size:11.5px;font-weight:400;line-height:12px;color:#5a5a5a;'>Console</div>
<div class=a style='left:868.6px;top:77px;font-family:"Liberation Sans";font-size:11.5px;font-weight:400;line-height:12px;color:#5a5a5a;letter-spacing:-0.18px;'>Sources</div>
<div class=a style='left:932.7px;top:76px;font-family:"Liberation Sans";font-size:12.5px;font-weight:400;line-height:14px;color:#333333;'>Network</div>
<div class=a style='left:1002.0px;top:76px;font-family:"Liberation Sans";font-size:11.75px;font-weight:400;line-height:13px;color:#5a5a5a;'>Performance</div>
<div class=a style='left:1091.7px;top:76px;font-family:"Liberation Sans";font-size:12.5px;font-weight:400;line-height:14px;color:#5a5a5a;'>Memory</div>
<div class=a style='left:1160.8px;top:76px;font-family:"Liberation Sans";font-size:12.25px;font-weight:400;line-height:14px;color:#5a5a5a;'>Application</div>
<div class=a style='left:922px;top:93px;width:69px;height:2px;background:#1a73e8;'></div>
<svg class=a style='left:1240px;top:76px;' width='12' height='12' viewBox='0 0 12 12'><path d='M2 2.5l3.5 3.5L2 9.5M6 2.5l3.5 3.5L6 9.5' fill='none' stroke='#5a5a5a' stroke-width='1.4'/></svg>
<svg class=a style='left:657px;top:99px;' width='20' height='20' viewBox='0 0 20 20'><defs><radialGradient id='rgl'><stop offset='0.6' stop-color='#d90000' stop-opacity='0.35'/><stop offset='1' stop-color='#d90000' stop-opacity='0'/></radialGradient></defs><circle cx='10' cy='9.8' r='9' fill='url(#rgl)'/><circle cx='10' cy='9.8' r='6' fill='#d90000'/></svg>
<svg class=a style='left:686px;top:100px;' width='19' height='19' viewBox='0 0 19 19'><circle cx='9.5' cy='9.5' r='5.8' fill='none' stroke='#6e6e6e' stroke-width='1.6'/><path d='M5.4 5.4l8.2 8.2' stroke='#6e6e6e' stroke-width='1.6'/></svg>
<div class=a style='left:713px;top:101px;width:1px;height:16px;background:#cccccc;'></div>
<svg class=a style='left:724px;top:102px;' width='16' height='16' viewBox='0 0 16 16'><path d='M1.8 2.8h12.6l-4.4 5.6v4.6c0 .6-.4 1-1 1H7c-.6 0-1-.4-1-1V8.4z' fill='#a8c7fa' stroke='#1a73e8' stroke-width='1.5' stroke-linejoin='round'/><path d='M3.5 4.3h9.2' stroke='#fff' stroke-width='1'/></svg>
<svg class=a style='left:751px;top:102px;' width='18' height='18' viewBox='0 0 18 18'><circle cx='7.3' cy='6.3' r='4.6' fill='none' stroke='#6e6e6e' stroke-width='1.5'/><path d='M10.6 9.6l4.6 4.6' stroke='#6e6e6e' stroke-width='1.6'/></svg>
<div class=a style='left:778px;top:101px;width:1px;height:16px;background:#cccccc;'></div>
<div class=a style='left:789px;top:103px;width:11px;height:11px;background:linear-gradient(#ececec,#dcdcdc);box-sizing:border-box;border:1px solid #b5b5b5;border-radius:2px'></div>
<div class=a style='left:806.4px;top:103px;font-family:"Liberation Sans";font-size:11.75px;font-weight:400;line-height:13px;color:#333;'>Preserve log</div>
<div class=a style='left:883px;top:103px;width:11px;height:11px;background:linear-gradient(#ececec,#dcdcdc);box-sizing:border-box;border:1px solid #b5b5b5;border-radius:2px'></div>
<div class=a style='left:900.6px;top:104px;font-family:"Liberation Sans";font-size:11.5px;font-weight:400;line-height:12px;color:#333;'>Disable cache</div>
<div class=a style='left:982px;top:101px;width:1px;height:16px;background:#cccccc;'></div>
<div class=a style='left:992.6px;top:103px;font-family:"Liberation Sans";font-size:11.75px;font-weight:400;line-height:13px;color:#333;'>Online</div>
<svg class=a style='left:1052px;top:105px;' width='9' height='8' viewBox='0 0 9 8'><path d='M0.5 0.5h8L4.5 7.5z' fill='#6e6e6e'/></svg>
<div class=a style='left:1072px;top:101px;width:1px;height:16px;background:#cccccc;'></div>
<svg class=a style='left:1085px;top:102px;' width='12' height='14' viewBox='0 0 12 14'><path d='M5.5 1L10.5 6.5H7.5V10h-4V6.5H0.5z' fill='#6e6e6e'/><rect x='0.5' y='11.6' width='10.6' height='1.4' fill='#6e6e6e'/></svg>
<svg class=a style='left:1113px;top:102px;' width='12' height='14' viewBox='0 0 12 14'><path d='M5.8 11L0.8 5.5h3V1h4v4.5h3z' fill='#6e6e6e'/><rect x='0.8' y='11.6' width='10.6' height='1.4' fill='#6e6e6e'/></svg>
<div class=a style='left:655px;top:126px;width:163px;height:18px;background:#ffffff;'></div>
<div class=a style='left:657.6px;top:130px;font-family:"Liberation Sans";font-size:11.75px;font-weight:400;line-height:13px;color:#808080;'>Filter</div>
<div class=a style='left:831px;top:129px;width:11px;height:11px;background:linear-gradient(#ececec,#dcdcdc);box-sizing:border-box;border:1px solid #b5b5b5;border-radius:2px'></div>
<div class=a style='left:848.0px;top:131px;font-family:"Liberation Sans";font-size:11.5px;font-weight:400;line-height:12px;color:#333;'>Hide data URLs</div>
<div class=a style='left:936px;top:125px;width:19px;height:22px;background:#a3a3a3;border-radius:6px'></div>
<div class=a style='left:938.9px;top:130px;font-family:"Liberation Sans";font-size:12.0px;font-weight:400;line-height:14px;color:#ffffff;'>All</div>
<div class=a style='left:959px;top:127px;width:1px;height:16px;background:#cccccc;'></div>
<div class=a style='left:967.9px;top:131px;font-family:"Liberation Sans";font-size:11.25px;font-weight:400;line-height:12px;color:#333;letter-spacing:-0.50px;'>XHR</div>
<div class=a style='left:1000.0px;top:131px;font-family:"Liberation Sans";font-size:11.25px;font-weight:400;line-height:12px;color:#333;letter-spacing:-0.80px;'>JS</div>
<div class=a style='left:1021.0px;top:131px;font-family:"Liberation Sans";font-size:11.25px;font-weight:400;line-height:12px;color:#333;letter-spacing:-0.80px;'>CSS</div>
<div class=a style='left:1050.4px;top:130px;font-family:"Liberation Sans";font-size:12.5px;font-weight:400;line-height:14px;color:#333;'>Img</div>
<div class=a style='left:1081.4px;top:130px;font-family:"Liberation Sans";font-size:12.0px;font-weight:400;line-height:14px;color:#333;'>Media</div>
<div class=a style='left:1124.1px;top:130px;font-family:"Liberation Sans";font-size:12.0px;font-weight:400;line-height:14px;color:#333;'>Font</div>
<div class=a style='left:1158.0px;top:130px;font-family:"Liberation Sans";font-size:12.25px;font-weight:400;line-height:14px;color:#333;letter-spacing:-0.35px;'>Doc</div>
<div class=a style='left:1189.8px;top:131px;font-family:"Liberation Sans";font-size:11.25px;font-weight:400;line-height:12px;color:#333;letter-spacing:-0.80px;'>WS</div>
<div class=a style='left:1216.7px;top:130px;font-family:"Liberation Sans";font-size:12.0px;font-weight:400;line-height:14px;color:#333;'>Manifest</div>
<div class=a style='left:1273.2px;top:130px;font-family:"Liberation Sans";font-size:12.0px;font-weight:400;line-height:14px;color:#333;'>Other</div>
<div class=a style='left:651px;top:148px;width:207px;height:26px;background:#f3f3f3;'></div>
<div class=a style='left:654.5px;top:155px;font-family:"Liberation Sans";font-size:12.0px;font-weight:400;line-height:14px;color:#333;'>Name</div>
<div class=a style='left:651px;top:174px;width:207px;height:2px;background:#d2d0ce;'></div>
<div class=a style='left:858px;top:148px;width:1px;height:465px;background:#cccccc;'></div>
<div class=a style='left:859px;top:148px;width:436px;height:26px;background:#f3f3f3;'></div>
<div class=a style='left:859px;top:174px;width:436px;height:1px;background:#cccccc;'></div>
<svg class=a style='left:866px;top:155px;' width='12' height='12' viewBox='0 0 12 12'><path d='M2.5 2.5l7 7M9.5 2.5l-7 7' stroke='#5a5a5a' stroke-width='1.3'/></svg>
<div class=a style='left:892.2px;top:156px;font-family:"Liberation Sans";font-size:11.5px;font-weight:400;line-height:12px;color:#333;'>Headers</div>
<div class=a style='left:955.0px;top:156px;font-family:"Liberation Sans";font-size:11.5px;font-weight:400;line-height:12px;color:#5a5a5a;'>Preview</div>
<div class=a style='left:1015.0px;top:156px;font-family:"Liberation Sans";font-size:11.5px;font-weight:400;line-height:12px;color:#5a5a5a;'>Response</div>
<div class=a style='left:1085.4px;top:155px;font-family:"Liberation Sans";font-size:11.75px;font-weight:400;line-height:13px;color:#5a5a5a;'>Cookies</div>
<div class=a style='left:1147.0px;top:155px;font-family:"Liberation Sans";font-size:12.0px;font-weight:400;line-height:14px;color:#5a5a5a;'>Timing</div>
<div class=a style='left:883px;top:173px;width:63px;height:2px;background:#1a73e8;'></div>
<div class=a style='left:651px;top:176px;width:207px;height:410px;background:#ffffff;'></div>
<div class=a style='left:651px;top:176px;width:207px;height:21px;background:#1a73e8;'></div>
<svg class=a style='left:657px;top:180px;' width='12' height='14' viewBox='0 0 12 14'><rect x='0.5' y='0.5' width='11' height='13' fill='#fff' stroke='#1d3f73'/></svg>
<div class=a style='left:673.5px;top:179px;font-family:"Liberation Sans";font-size:12.75px;font-weight:400;line-height:15px;color:#ffffff;letter-spacing:-0.18px;'>hello</div>
<svg class=a style='left:657px;top:201px;' width='12' height='14' viewBox='0 0 12 14'><rect x='0.5' y='0.5' width='11' height='13' fill='#fff' stroke='#a6a6a6'/><path d='M3 3.5h2M6 3.5h3M3 5.5h3M7 5.5h2M3 7.5h2M6 7.5h3M3 9.5h4M8 9.5h1M3 11.5h2M6 11.5h1' stroke='#dedede' stroke-width='1'/></svg>
<div class=a style='left:673.5px;top:200px;font-family:"Liberation Sans";font-size:12.75px;font-weight:400;line-height:15px;color:#333;letter-spacing:0.20px;'>login</div>
<div class=a style='left:651px;top:218px;width:207px;height:21px;background:#f5f5f5;'></div>
<svg class=a style='left:657px;top:222px;' width='12' height='14' viewBox='0 0 12 14'><rect x='0.5' y='0.5' width='11' height='13' fill='#fff' stroke='#a6a6a6'/><path d='M3 3.5h2M6 3.5h3M3 5.5h3M7 5.5h2M3 7.5h2M6 7.5h3M3 9.5h4M8 9.5h1M3 11.5h2M6 11.5h1' stroke='#dedede' stroke-width='1'/></svg>
<div class=a style='left:674.5px;top:222px;font-family:"Liberation Sans";font-size:11.75px;font-weight:400;line-height:13px;color:#333;'>bootstrap.min.css</div>
<svg class=a style='left:657px;top:243px;' width='12' height='14' viewBox='0 0 12 14'><rect x='0.5' y='0.5' width='11' height='13' fill='#fff' stroke='#a6a6a6'/><path d='M3 3.5h2M6 3.5h3M3 5.5h3M7 5.5h2M3 7.5h2M6 7.5h3M3 9.5h4M8 9.5h1M3 11.5h2M6 11.5h1' stroke='#dedede' stroke-width='1'/></svg>
<div class=a style='left:674.5px;top:244px;font-family:"Liberation Sans";font-size:11.25px;font-weight:400;line-height:12px;color:#333;'>signin.css</div>
<div class=a style='left:651px;top:260px;width:207px;height:21px;background:#f5f5f5;'></div>
<svg class=a style='left:657px;top:264px;' width='12' height='14' viewBox='0 0 12 14'><rect x='0.5' y='0.5' width='11' height='13' fill='#fff' stroke='#a6a6a6'/><path d='M3 3.5h2M6 3.5h3M3 5.5h3M7 5.5h2M3 7.5h2M6 7.5h3M3 9.5h4M8 9.5h1M3 11.5h2M6 11.5h1' stroke='#dedede' stroke-width='1'/></svg>
<div class=a style='left:674.5px;top:265px;font-family:"Liberation Sans";font-size:11.25px;font-weight:400;line-height:12px;color:#333;'>index.js</div>
<svg class=a style='left:657px;top:285px;' width='12' height='14' viewBox='0 0 12 14'><rect x='0.5' y='0.5' width='11' height='13' fill='#fff' stroke='#a6a6a6'/><rect x='5' y='6' width='2' height='2' fill='#4a90e2'/><path d='M6 3v2M6 9v2M3 7h1.5M7.5 7h1.5' stroke='#e8e8e8'/></svg>
<div class=a style='left:674.5px;top:285px;font-family:"Liberation Sans";font-size:11.75px;font-weight:400;line-height:13px;color:#333;'>cursor-imagen.svg</div>
<div class=a style='left:651px;top:302px;width:207px;height:21px;background:#f5f5f5;'></div>
<svg class=a style='left:657px;top:306px;' width='12' height='14' viewBox='0 0 12 14'><rect x='0.5' y='0.5' width='11' height='13' fill='#fff' stroke='#a6a6a6'/></svg>
<div class=a style='left:674.5px;top:306px;font-family:"Liberation Sans";font-size:11.75px;font-weight:400;line-height:13px;color:#333;'>favicon.ico</div>
<svg class=a style='left:657px;top:327px;' width='12' height='14' viewBox='0 0 12 14'><rect x='0.5' y='0.5' width='11' height='13' fill='#fff' stroke='#a6a6a6'/></svg>
<div class=a style='left:673.5px;top:326px;font-family:"Liberation Sans";font-size:12.75px;font-weight:400;line-height:15px;color:#333;letter-spacing:0.20px;'>login</div>
<div class=a style='left:651px;top:586px;width:207px;height:1px;background:#cccccc;'></div>
<div class=a style='left:651px;top:587px;width:207px;height:26px;background:#f3f3f3;'></div>
<div class=a style='left:661.3px;top:594px;font-family:"Liberation Sans";font-size:11.5px;font-weight:400;line-height:12px;color:#333;'>8 requests</div>
<div class=a style='left:725px;top:593px;width:1px;height:15px;background:#cccccc;'></div>
<div class=a style='left:734.6px;top:594px;font-family:"Liberation Sans";font-size:11.5px;font-weight:400;line-height:12px;color:#333;'>14.1 KB transferred</div>
<div class=a style='left:844px;top:593px;width:1px;height:15px;background:#cccccc;'></div>
<div class=a style='left:854px;top:598px;width:1px;height:2px;background:#999;'></div>
<svg class=a style='left:865px;top:188px;' width='8' height='7' viewBox='0 0 8 7'><path d='M0.3 0.8h7.2L3.9 6z' fill='#6e6e6e'/></svg>
<div class=a style='left:875.5px;top:185px;font-family:"Liberation Sans";font-size:11.5px;font-weight:700;line-height:12px;color:#303030;'>General</div>
<div class=a style='left:877px;top:206px;width:294px;height:20px;background:transparent;box-sizing:border-box;border:1px solid #ef2b2b'></div>
<div class=a style='left:884.7px;top:209px;font-family:"Liberation Sans";font-size:11.5px;font-weight:700;line-height:12px;color:#383838;'>Request URL:</div>
<div class=a style='left:964.7px;top:210px;font-family:"Liberation Mono";font-size:11px;font-weight:400;line-height:12px;color:#222;-webkit-text-stroke:0.15px #222'>http://localhost:8080/hello</div>
<div class=a style='left:884.7px;top:231px;font-family:"Liberation Sans";font-size:11.5px;font-weight:700;line-height:12px;color:#383838;letter-spacing:0.16px;'>Request Method:</div>
<div class=a style='left:987.0px;top:232px;font-family:"Liberation Mono";font-size:11px;font-weight:400;line-height:12px;color:#222;-webkit-text-stroke:0.15px #222'>GET</div>
<div class=a style='left:884.7px;top:253px;font-family:"Liberation Sans";font-size:11.5px;font-weight:700;line-height:12px;color:#383838;'>Status Code:</div>
<div class=a style='left:975.0px;top:254px;font-family:"Liberation Mono";font-size:11px;font-weight:400;line-height:12px;color:#222;-webkit-text-stroke:0.15px #222'>302</div>
<div class=a style='left:884.7px;top:275px;font-family:"Liberation Sans";font-size:11.5px;font-weight:700;line-height:12px;color:#383838;'>Remote Address:</div>
<div class=a style='left:984.6px;top:276px;font-family:"Liberation Mono";font-size:11px;font-weight:400;line-height:12px;color:#222;-webkit-text-stroke:0.15px #222'>[::1]:8080</div>
<div class=a style='left:884.7px;top:297px;font-family:"Liberation Sans";font-size:11.5px;font-weight:700;line-height:12px;color:#383838;'>Referrer Policy:</div>
<div class=a style='left:975.6px;top:298px;font-family:"Liberation Mono";font-size:11px;font-weight:400;line-height:12px;color:#222;-webkit-text-stroke:0.15px #222'>no-referrer-when-downgrade</div>
<svg class=a style='left:959px;top:252px;' width='12' height='12' viewBox='0 0 12 12'><defs><radialGradient id='g1' cx='0.4' cy='0.35' r='0.7'><stop offset='0' stop-color='#ffe066'/><stop offset='1' stop-color='#f0a800'/></radialGradient></defs><circle cx='6' cy='6' r='5' fill='url(#g1)'/></svg>
<div class=a style='left:859px;top:318px;width:436px;height:1px;background:#e0e0e0;'></div>
<svg class=a style='left:865px;top:330px;' width='8' height='7' viewBox='0 0 8 7'><path d='M0.3 0.8h7.2L3.9 6z' fill='#6e6e6e'/></svg>
<div class=a style='left:875.4px;top:327px;font-family:"Liberation Sans";font-size:11.25px;font-weight:700;line-height:12px;color:#303030;'>Response Headers</div>
<div class=a style='left:1007.9px;top:326px;font-family:"Liberation Sans";font-size:11.75px;font-weight:400;line-height:13px;color:#808080;'>view source</div>
<div class=a style='left:884.7px;top:351px;font-family:"Liberation Sans";font-size:11.5px;font-weight:700;line-height:12px;color:#383838;'>Cache-Control:</div>
<div class=a style='left:973.5px;top:352px;font-family:"Liberation Mono";font-size:11px;font-weight:400;line-height:12px;color:#222;-webkit-text-stroke:0.15px #222'>no-cache, no-store, max-age=0, must-revalidate</div>
<div class=a style='left:884.7px;top:373px;font-family:"Liberation Sans";font-size:11.5px;font-weight:700;line-height:12px;color:#383838;'>Connection:</div>
<div class=a style='left:957.0px;top:374px;font-family:"Liberation Mono";font-size:11px;font-weight:400;line-height:12px;color:#222;-webkit-text-stroke:0.15px #222'>keep-alive</div>
<div class=a style='left:884.7px;top:395px;font-family:"Liberation Sans";font-size:11.5px;font-weight:700;line-height:12px;color:#383838;letter-spacing:0.19px;'>Content-Length:</div>
<div class=a style='left:982.4px;top:396px;font-family:"Liberation Mono";font-size:11px;font-weight:400;line-height:12px;color:#222;-webkit-text-stroke:0.15px #222'>0</div>
<div class=a style='left:884.7px;top:417px;font-family:"Liberation Sans";font-size:11.5px;font-weight:700;line-height:12px;color:#383838;letter-spacing:0.17px;'>Date:</div>
<div class=a style='left:919.6px;top:418px;font-family:"Liberation Mono";font-size:11px;font-weight:400;line-height:12px;color:#222;-webkit-text-stroke:0.15px #222'>Tue, 24 Dec 2019 06:26:46 GMT</div>
<div class=a style='left:884.7px;top:439px;font-family:"Liberation Sans";font-size:11.5px;font-weight:700;line-height:12px;color:#383838;letter-spacing:-0.24px;'>Expires:</div>
<div class=a style='left:933.8px;top:440px;font-family:"Liberation Mono";font-size:11px;font-weight:400;line-height:12px;color:#222;-webkit-text-stroke:0.15px #222'>0</div>
<div class=a style='left:884.7px;top:461px;font-family:"Liberation Sans";font-size:11.5px;font-weight:700;line-height:12px;color:#383838;'>Keep-Alive:</div>
<div class=a style='left:954.2px;top:462px;font-family:"Liberation Mono";font-size:11px;font-weight:400;line-height:12px;color:#222;-webkit-text-stroke:0.15px #222'>timeout=60</div>
<div class=a style='left:884.7px;top:483px;font-family:"Liberation Sans";font-size:11.5px;font-weight:700;line-height:12px;color:#383838;'>Location:</div>
<div class=a style='left:941.7px;top:484px;font-family:"Liberation Mono";font-size:11px;font-weight:400;line-height:12px;color:#222;-webkit-text-stroke:0.15px #222'>http://localhost:8080/login</div>
<div class=a style='left:884.7px;top:505px;font-family:"Liberation Sans";font-size:11.5px;font-weight:700;line-height:12px;color:#383838;'>Pragma:</div>
<div class=a style='left:936.2px;top:506px;font-family:"Liberation Mono";font-size:11px;font-weight:400;line-height:12px;color:#222;-webkit-text-stroke:0.15px #222'>no-cache</div>
<div class=a style='left:884.7px;top:527px;font-family:"Liberation Sans";font-size:11.5px;font-weight:700;line-height:12px;color:#383838;letter-spacing:0.26px;'>X-Content-Type-Options:</div>
<div class=a style='left:1032.0px;top:528px;font-family:"Liberation Mono";font-size:11px;font-weight:400;line-height:12px;color:#222;-webkit-text-stroke:0.15px #222'>nosniff</div>
<div class=a style='left:884.7px;top:549px;font-family:"Liberation Sans";font-size:11.5px;font-weight:700;line-height:12px;color:#383838;letter-spacing:0.20px;'>X-Frame-Options:</div>
<div class=a style='left:991.4px;top:550px;font-family:"Liberation Mono";font-size:11px;font-weight:400;line-height:12px;color:#222;-webkit-text-stroke:0.15px #222'>DENY</div>
<div class=a style='left:884.7px;top:571px;font-family:"Liberation Sans";font-size:11.5px;font-weight:700;line-height:12px;color:#383838;'>X-XSS-Protection:</div>
<div class=a style='left:991.2px;top:572px;font-family:"Liberation Mono";font-size:11px;font-weight:400;line-height:12px;color:#222;-webkit-text-stroke:0.15px #222'>1; mode=block</div>
<div class=a style='left:859px;top:592px;width:436px;height:1px;background:#e0e0e0;'></div>
<svg class=a style='left:865px;top:603px;' width='8' height='7' viewBox='0 0 8 7'><path d='M0.3 0.8h7.2L3.9 6z' fill='#6e6e6e'/></svg>
<div class=a style='left:875.4px;top:601px;font-family:"Liberation Sans";font-size:11.5px;font-weight:700;line-height:12px;color:#303030;'>Request Headers</div>
<div class=a style='left:1000.0px;top:600px;font-family:"Liberation Sans";font-size:11.75px;font-weight:400;line-height:13px;color:#808080;'>view source</div>
<div class=a style='left:651px;top:613px;width:644px;height:1px;background:#cccccc;'></div>
<div class=a style='left:651px;top:614px;width:644px;height:26px;background:#f3f3f3;'></div>
<div class=a style='left:651px;top:640px;width:644px;height:1px;background:#cccccc;'></div>
<div class=a style='left:665.5px;top:622px;width:3px;height:3px;background:#6e6e6e;border-radius:50%'></div>
<div class=a style='left:665.5px;top:627px;width:3px;height:3px;background:#6e6e6e;border-radius:50%'></div>
<div class=a style='left:665.5px;top:632px;width:3px;height:3px;background:#6e6e6e;border-radius:50%'></div>
<div class=a style='left:688.5px;top:622px;font-family:"Liberation Sans";font-size:11.5px;font-weight:400;line-height:12px;color:#333;'>Console</div>
<div class=a style='left:750.7px;top:621px;font-family:"Liberation Sans";font-size:11.75px;font-weight:400;line-height:13px;color:#5a5a5a;'>What&#x27;s New</div>
<div class=a style='left:679px;top:639px;width:62px;height:2px;background:#1a73e8;'></div>
<div class=a style='left:1068.0px;top:614px;font-family:"Liberation Sans";font-size:16.0px;font-weight:400;line-height:17px;color:#f8f8f8;text-shadow:0 0 1px #b0b0b0, 1px 1px 1px #c8c8c8'>https://quellanan.blog.csdn.net</div>
</body></html>
